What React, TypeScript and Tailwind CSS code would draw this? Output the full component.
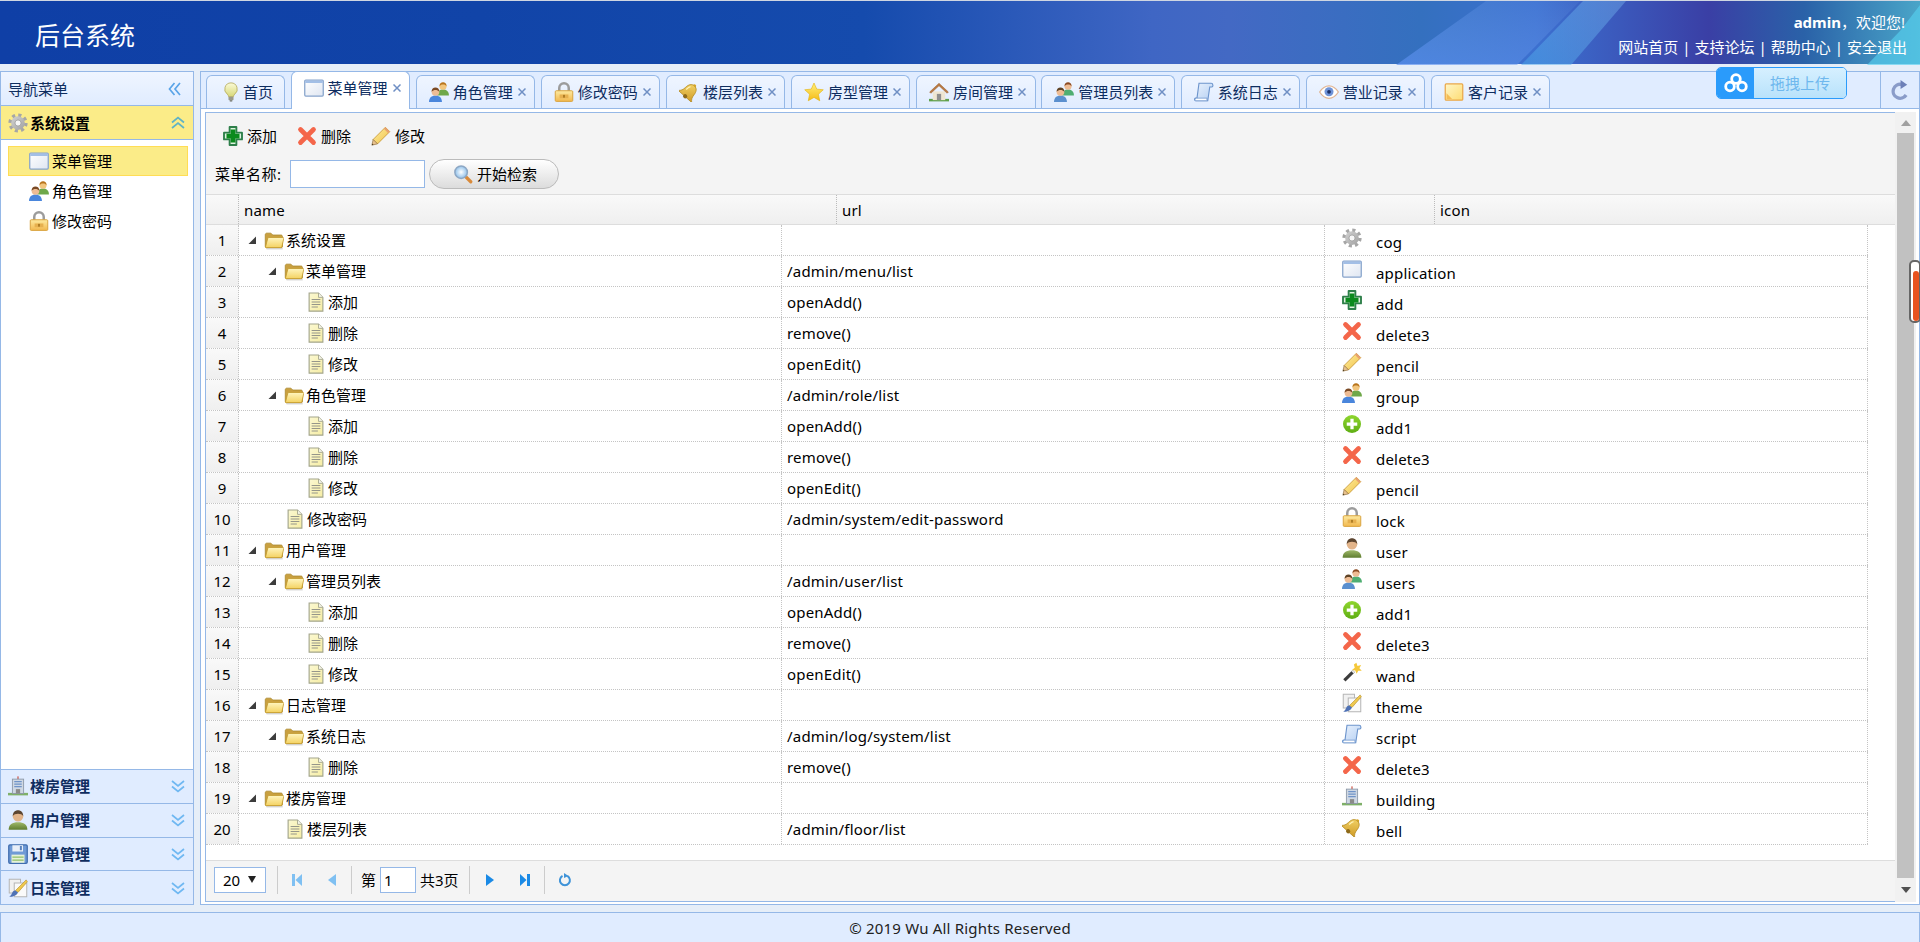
import type { ReactNode } from "react";

// small person used by the group / users / user icons
const Person = ({ x, y, s = 1, hair, skin, body }: { x: number; y: number; s?: number; hair: string; skin: string; body: string }) => (
  <g transform={`translate(${x} ${y}) scale(${s})`}>
    <path d="M0 10c0-3 2-4.500 4.500-4.500S9 7 9 10z" fill={body} />
    <circle cx="4.500" cy="3" r="2.700" fill={skin} />
    <path d="M1.800 3c0-2 1.200-3 2.700-3s2.700 1 2.700 3c-.8-1-1.600-1.300-2.700-1.300S2.600 2 1.800 3z" fill={hair} />
  </g>
);

const ICONS: Record<string, ReactNode> = {
  bulb: (
    <>
      <path d="M8 .7a5 5 0 0 0-3 9c.7.6 1 1.200 1 2h4c0-.8.3-1.400 1-2a5 5 0 0 0-3-9z" fill="url(#bulbFill)" stroke="#b8ae62" strokeWidth=".7" />
      <rect x="6" y="11.800" width="4" height="2.800" rx=".6" fill="#9a9a8c" />
      <rect x="7" y="14.600" width="2" height="1" fill="#6d6d62" />
    </>
  ),
  app: (
    <>
      <rect x=".6" y="1.600" width="14.800" height="12.800" rx=".8" fill="url(#winFill)" stroke="#86a3cb" strokeWidth="1" />
      <rect x="1" y="2" width="14" height="2" fill="#a3bfe6" />
    </>
  ),
  group: (
    <>
      <Person x={6.5} y={0.2} s={1.05} hair="#b8741d" skin="#f2c67e" body="#6fa84a" />
      <Person x={0} y={4.4} s={1.15} hair="#7a4a25" skin="#eebc94" body="#4a86dc" />
    </>
  ),
  users: (
    <>
      <Person x={6.5} y={0.2} s={1.05} hair="#8a4a22" skin="#eebc94" body="#4fae72" />
      <Person x={0} y={4.4} s={1.15} hair="#5f4325" skin="#eebc94" body="#5b90cf" />
    </>
  ),
  user: (
    <>
      <path d="M.5 15.800c0-4.200 3-6 7.500-6s7.500 1.800 7.500 6z" fill="url(#oliveFill)" />
      <circle cx="8" cy="5" r="4.200" fill="#e2b48a" />
      <path d="M3.800 5c0-3.200 1.900-4.800 4.200-4.800S12.200 1.800 12.200 5c-.8-1.500-2.400-2-4.200-2s-3.400.5-4.200 2z" fill="#5c4530" />
    </>
  ),
  lock: (
    <>
      <path d="M4.200 8V4.800a3.800 3.800 0 0 1 7.600 0V8" fill="none" stroke="#9c9c9c" strokeWidth="2" />
      <rect x="1" y="7" width="14" height="8.500" rx=".8" fill="url(#goldFill)" stroke="#d9a441" strokeWidth=".8" />
      <rect x="4.500" y="10" width="7" height="3" fill="#e6b04f" />
      <rect x="7.300" y="10.300" width="1.400" height="2.200" fill="#a87722" />
    </>
  ),
  bell: (
    <g transform="rotate(42 8 8)">
      <circle cx="8" cy="1.400" r="1.300" fill="#d9a520" />
      <path d="M8 1.500C5 1.500 3.700 4 3.500 7c-.2 3-1 4.300-2.700 5.800h14.400c-1.700-1.500-2.500-2.800-2.700-5.800C12.300 4 11 1.500 8 1.500z" fill="url(#bellFill)" stroke="#b38a22" strokeWidth=".6" />
      <circle cx="8" cy="12.600" r="1.700" fill="#8e6a1a" />
      <path d="M6 4c-.7 1-.9 2.500-1 4" stroke="#fff3b8" strokeWidth="1" fill="none" />
    </g>
  ),
  star: (
    <polygon points="8,.8 10.200,5.700 15.400,6.200 11.500,9.800 12.600,15 8,12.300 3.400,15 4.500,9.800 .6,6.200 5.800,5.700" fill="url(#starFill)" stroke="#e3b30e" strokeWidth=".5" />
  ),
  house: (
    <>
      <rect x="0" y="13.500" width="16" height="2" fill="#5fa04a" />
      <rect x="3" y="7.500" width="10" height="7" fill="#efe6d2" />
      <path d="M8 1 .5 8l1 1L8 3l6.500 6 1-1z" fill="#b97a43" stroke="#9a5f2e" strokeWidth=".4" />
      <rect x="6.300" y="9.500" width="3.400" height="5" fill="#8f8f8f" />
    </>
  ),
  script: (
    <>
      <path d="M4 1h9.800c1.500 0 1.800 2.800.4 3H12.600L11 15H1.200c-.9 0-1.100-1.900 0-2.100h1.200z" fill="url(#scriptFill)" stroke="#6c94cc" strokeWidth=".9" />
      <path d="M1.200 15h9.600c-.6-.5-.7-1.700-.2-2.100H2" fill="#fff" stroke="#6c94cc" strokeWidth=".6" />
    </>
  ),
  eye: (
    <>
      <path d="M.5 8C3 4 5.500 3 8 3s5 1 7.500 5C13 12 10.500 13 8 13S3 12 .5 8z" fill="#fff" stroke="#e0b594" strokeWidth="1" />
      <circle cx="8" cy="7.800" r="3.600" fill="#6f93d8" />
      <circle cx="8" cy="7.800" r="1.500" fill="#1b2f66" />
    </>
  ),
  note: (
    <>
      <rect x="1" y="1.500" width="14" height="13" rx=".8" fill="url(#noteFill)" stroke="#eaa84a" strokeWidth="1" />
      <path d="M2 13.500V9l4.500 4.500z" fill="#f5bd57" />
    </>
  ),
  cog: (
    <>
      <circle cx="8" cy="8" r="6.300" fill="none" stroke="#a6a6a6" strokeWidth="2.800" strokeDasharray="2.475 2.475" />
      <circle cx="8" cy="8" r="5.500" fill="url(#cogFill)" />
      <circle cx="8" cy="8" r="2.400" fill="#f6f6f6" stroke="#8e8e8e" strokeWidth=".5" />
    </>
  ),
  add: (
    <>
      <path d="M5.300.8h5.400v4.500h4.500v5.400h-4.500v4.500H5.300v-4.500H.8V5.300h4.500z" fill="#dff3df" stroke="#2e7f4a" strokeWidth="1.500" strokeLinejoin="round" />
      <path d="M6.100 2.800h3.800v3.300h3.300v3.800H9.900v3.300H6.100V9.900H2.800V6.100h3.300z" fill="#0b8a1d" />
    </>
  ),
  delete3: (
    <path d="M2.800 2.800 13.200 13.200M13.200 2.800 2.800 13.200" stroke="#f4664a" strokeWidth="3.800" strokeLinecap="round" />
  ),
  pencil: (
    <>
      <path d="M11.500 1 15 4.500 5.200 14.300 1.700 10.800z" fill="url(#pencilFill)" stroke="#c99a3c" strokeWidth=".7" />
      <path d="M1.700 10.800 .7 15.300l4.500-1z" fill="#e7c08c" stroke="#8a6a3a" strokeWidth=".5" />
      <path d="M1 14 .7 15.300 2 15z" fill="#4a3a22" />
      <path d="M11.500 1 15 4.500 13.800 5.700 10.300 2.200z" fill="#e8a070" />
    </>
  ),
  add1: (
    <>
      <circle cx="8" cy="8" r="7.200" fill="url(#limeFill)" />
      <path d="M6.700 3.800h2.600v2.900h2.900v2.600H9.300v2.900H6.700V9.300H3.800V6.700h2.900z" fill="#fff" />
    </>
  ),
  wand: (
    <>
      <path d="M1 13.800 8.500 6.300l1.800 1.800L2.800 15.600z" fill="#3c3c3c" />
      <path d="M7.500 7.300 8.500 6.300l1.800 1.800-1 1z" fill="#e8e8e8" />
      <polygon points="11.500,.5 12.400,3.100 15.300,2.300 13.900,5 15.800,7 13,7 11.700,9.400 10.600,6.800 8,6.300 10.200,4.500 9.500,1.900" fill="#f5c83a" />
    </>
  ),
  theme: (
    <>
      <rect x="1" y="1" width="9" height="11" fill="#f1f1f1" stroke="#b5b5b5" strokeWidth=".8" />
      <rect x="5" y="4" width="10" height="11" fill="#fafafa" stroke="#b5b5b5" strokeWidth=".8" />
      <path d="M14.500 1.500 15.500 3 8 11.500 6 10z" fill="#efc94e" stroke="#b78e2c" strokeWidth=".5" />
      <path d="M6 10 8 11.500C7 14 4 15 1 15c1.500-1 2-2.500 2.500-3.500.5-1 1.500-1.500 2.500-1.500z" fill="#4f72b5" />
    </>
  ),
  building: (
    <>
      <rect x="0" y="13.500" width="16" height="2" fill="#7fb069" />
      <rect x="7.500" y=".3" width="1" height="2.500" fill="#d0584a" />
      <rect x="3.500" y="2.500" width="9" height="11.500" fill="#cfd8e4" stroke="#8b97a6" strokeWidth=".7" />
      <path d="M5 4.500h6M5 6.500h6M5 8.500h6" stroke="#6f93c8" strokeWidth="1" />
      <rect x="6.300" y="10.500" width="3.400" height="3.500" fill="#8a8a8a" />
    </>
  ),
  save: (
    <>
      <rect x=".6" y=".6" width="14.800" height="14.800" rx="1" fill="#6f9ad6" stroke="#3f6cae" strokeWidth="1" />
      <rect x="3.500" y="1" width="8.500" height="5" fill="#e9eff8" />
      <rect x="9.500" y="1.600" width="1.600" height="3.400" fill="#5a83be" />
      <rect x="2.800" y="8.500" width="10.400" height="6.500" fill="#e6f2d8" />
      <path d="M3.500 10.500h9M3.500 12.800h9" stroke="#8fbf68" strokeWidth="1" />
    </>
  ),
  folder: (
    <>
      <path d="M1 4c0-1 .5-1.500 1.300-1.500h3.200L7 4h6.500c.8 0 1.300.5 1.300 1.300V13c0 .8-.5 1.300-1.300 1.300H2.300C1.500 14.300 1 13.800 1 13z" fill="#c9a040" stroke="#a98628" strokeWidth=".6" />
      <path d="M1.200 13.600 3 6.700c.1-.4.400-.7.900-.7h11.200c.6 0 .9.400.7.900l-1.500 6.500c-.1.500-.5.700-1 .7H1.900c-.5 0-.8-.2-.7-.5z" fill="url(#folderFill)" stroke="#c09728" strokeWidth=".6" />
      <rect x="2" y="14.600" width="13" height=".9" fill="#cfcfcf" />
    </>
  ),
  file: (
    <>
      <path d="M2.500 .8h7.500l3.500 3.500v11H2.500z" fill="url(#fileFill)" stroke="#a3a58c" strokeWidth=".9" />
      <path d="M10 .8v3.500h3.500" fill="#f4f4e8" stroke="#a3a58c" strokeWidth=".7" />
      <path d="M4.500 6h7M4.500 8h7M4.500 10h7M4.500 12h5" stroke="#96968a" strokeWidth=".8" />
    </>
  ),
  search: (
    <>
      <path d="M9.800 9.800 14.200 14.200" stroke="#d98a3a" strokeWidth="2.600" strokeLinecap="round" />
      <circle cx="6.500" cy="6.500" r="5" fill="url(#glassFill)" stroke="#8da7c4" strokeWidth="1.200" />
    </>
  ),
};

const Icon = ({ name, size = 20 }: { name: string; size?: number }) => (
  <svg viewBox="0 0 16 16" width={size} height={size} className="block shrink-0">
    {ICONS[name]}
  </svg>
);

// shared gradients for the icon set
const IconDefs = () => (
  <svg className="absolute h-0 w-0" aria-hidden="true">
    <defs>
      <linearGradient id="bulbFill" x1="0" y1="0" x2="0" y2="1"><stop offset="0" stopColor="#fbfbd8" /><stop offset="1" stopColor="#d7d878" /></linearGradient>
      <linearGradient id="winFill" x1="0" y1="0" x2="1" y2="1"><stop offset="0" stopColor="#ffffff" /><stop offset="1" stopColor="#dfe6f2" /></linearGradient>
      <linearGradient id="cogFill" x1="0" y1="0" x2="1" y2="1"><stop offset="0" stopColor="#d2d2d2" /><stop offset="1" stopColor="#a2a2a2" /></linearGradient>
      <linearGradient id="oliveFill" x1="0" y1="0" x2="0" y2="1"><stop offset="0" stopColor="#9fb86a" /><stop offset="1" stopColor="#5f7d2f" /></linearGradient>
      <linearGradient id="goldFill" x1="0" y1="0" x2="0" y2="1"><stop offset="0" stopColor="#fdeaa0" /><stop offset="1" stopColor="#f2b84e" /></linearGradient>
      <linearGradient id="bellFill" x1="0" y1="0" x2="1" y2="1"><stop offset="0" stopColor="#f8dc72" /><stop offset="1" stopColor="#cf9a25" /></linearGradient>
      <linearGradient id="starFill" x1="0" y1="0" x2="0" y2="1"><stop offset="0" stopColor="#fff07a" /><stop offset="1" stopColor="#f6bb16" /></linearGradient>
      <linearGradient id="scriptFill" x1="0" y1="0" x2="1" y2="1"><stop offset="0" stopColor="#eaf2fd" /><stop offset="1" stopColor="#b4cff2" /></linearGradient>
      <linearGradient id="noteFill" x1="0" y1="0" x2="1" y2="1"><stop offset="0" stopColor="#fff6c8" /><stop offset="1" stopColor="#fddc73" /></linearGradient>
      <linearGradient id="pencilFill" x1="0" y1="0" x2="1" y2="1"><stop offset="0" stopColor="#fff0a0" /><stop offset="1" stopColor="#f0c048" /></linearGradient>
      <linearGradient id="limeFill" x1="0" y1="0" x2="0" y2="1"><stop offset="0" stopColor="#8fd62f" /><stop offset="1" stopColor="#5fae14" /></linearGradient>
      <linearGradient id="folderFill" x1="0" y1="0" x2="0" y2="1"><stop offset="0" stopColor="#fff5bf" /><stop offset="1" stopColor="#f4d261" /></linearGradient>
      <linearGradient id="fileFill" x1="0" y1="0" x2="1" y2="1"><stop offset="0" stopColor="#fbf8d2" /><stop offset="1" stopColor="#f6eda4" /></linearGradient>
      <radialGradient id="glassFill"><stop offset="0" stopColor="#ffffff" /><stop offset="1" stopColor="#8fc0ea" /></radialGradient>
    </defs>
  </svg>
);

// double chevron of the panel headers
const Chevrons = ({ dir, color }: { dir: "up" | "down" | "left"; color: string }) => {
  const rotate = dir === "up" ? 180 : dir === "left" ? 90 : 0;
  return (
    <svg viewBox="0 0 14 14" width="14" height="14" className="block shrink-0" style={{ transform: `rotate(${rotate}deg)` }}>
      <path d="M1 2 7 7l6-5M1 7.500 7 12.500l6-5" fill="none" stroke={color} strokeWidth="1.700" />
    </svg>
  );
};

const Close = () => (
  <svg viewBox="0 0 8 8" width="8" height="8" className="block shrink-0">
    <path d="M.5.5l7 7M7.500.5l-7 7" stroke="#6f8fc4" strokeWidth="1.500" />
  </svg>
);

const TreeArrow = () => (
  <svg viewBox="0 0 10 10" width="10" height="10" className="block shrink-0">
    <polygon points="9,1.500 9,9 1.500,9" fill="#3c3c3c" />
  </svg>
);

const TABS = [
  { label: "首页", icon: "bulb", width: "w-[79px]", home: true },
  { label: "菜单管理", icon: "app", width: "w-[119.5px]", active: true },
  { label: "角色管理", icon: "group", width: "w-[119.5px]" },
  { label: "修改密码", icon: "lock", width: "w-[119.5px]" },
  { label: "楼层列表", icon: "bell", width: "w-[119.5px]" },
  { label: "房型管理", icon: "star", width: "w-[119.5px]" },
  { label: "房间管理", icon: "house", width: "w-[119.5px]" },
  { label: "管理员列表", icon: "users", width: "w-[134px]" },
  { label: "系统日志", icon: "script", width: "w-[119.5px]" },
  { label: "营业记录", icon: "eye", width: "w-[119.5px]" },
  { label: "客户记录", icon: "note", width: "w-[119.5px]" },
];

const ROWS = [
  { name: "系统设置", depth: 0, folder: true, url: "", icon: "cog", iconName: "cog" },
  { name: "菜单管理", depth: 1, folder: true, url: "/admin/menu/list", icon: "app", iconName: "application" },
  { name: "添加", depth: 2, url: "openAdd()", icon: "add", iconName: "add" },
  { name: "删除", depth: 2, url: "remove()", icon: "delete3", iconName: "delete3" },
  { name: "修改", depth: 2, url: "openEdit()", icon: "pencil", iconName: "pencil" },
  { name: "角色管理", depth: 1, folder: true, url: "/admin/role/list", icon: "group", iconName: "group" },
  { name: "添加", depth: 2, url: "openAdd()", icon: "add1", iconName: "add1" },
  { name: "删除", depth: 2, url: "remove()", icon: "delete3", iconName: "delete3" },
  { name: "修改", depth: 2, url: "openEdit()", icon: "pencil", iconName: "pencil" },
  { name: "修改密码", depth: 1, url: "/admin/system/edit-password", icon: "lock", iconName: "lock" },
  { name: "用户管理", depth: 0, folder: true, url: "", icon: "user", iconName: "user" },
  { name: "管理员列表", depth: 1, folder: true, url: "/admin/user/list", icon: "users", iconName: "users" },
  { name: "添加", depth: 2, url: "openAdd()", icon: "add1", iconName: "add1" },
  { name: "删除", depth: 2, url: "remove()", icon: "delete3", iconName: "delete3" },
  { name: "修改", depth: 2, url: "openEdit()", icon: "wand", iconName: "wand" },
  { name: "日志管理", depth: 0, folder: true, url: "", icon: "theme", iconName: "theme" },
  { name: "系统日志", depth: 1, folder: true, url: "/admin/log/system/list", icon: "script", iconName: "script" },
  { name: "删除", depth: 2, url: "remove()", icon: "delete3", iconName: "delete3" },
  { name: "楼房管理", depth: 0, folder: true, url: "", icon: "building", iconName: "building" },
  { name: "楼层列表", depth: 1, url: "/admin/floor/list", icon: "bell", iconName: "bell" },
];

const Banner = () => (
  <svg viewBox="0 0 1920 64" width="1920" height="64" className="absolute left-0 top-0 block">
    <defs>
      <linearGradient id="streakA" x1="0" y1="1" x2="1" y2="0"><stop offset="0" stopColor="#5a8ff0" stopOpacity=".7" /><stop offset="1" stopColor="#6f9fe8" stopOpacity=".1" /></linearGradient>
      <linearGradient id="streakB" x1="0" y1="1" x2="1" y2="0"><stop offset="0" stopColor="#4aa6e8" stopOpacity=".5" /><stop offset="1" stopColor="#7ab8f0" stopOpacity=".4" /></linearGradient>
    </defs>
    <polygon points="1396,64 1517,64 1580,0 1486,0" fill="url(#streakA)" />
    <polygon points="1521,64 1571,64 1626,0 1583,0" fill="url(#streakB)" />
    <polygon points="1867,64 1920,64 1920,4 1900,30" fill="#56cfee" opacity=".65" />
  </svg>
);

const West = () => (
  <aside className="flex w-[194px] shrink-0 flex-col border border-[#95b8e7] bg-white">
    <div className="flex h-[34px] shrink-0 items-center justify-between border-b border-[#95b8e7] bg-gradient-to-b from-[#eff5ff] to-[#e0ecff] pl-[7px] pr-[11px] text-[#0e2d5f]">
      <span>导航菜单</span>
      <Chevrons dir="left" color="#5aa4e8" />
    </div>
    <div className="flex h-[34px] shrink-0 items-center border-b border-[#95b8e7] bg-[#fbec88] pl-[7px] pr-[8px]">
      <Icon name="cog" />
      <span className="ml-[2px] flex-1 font-bold text-black">系统设置</span>
      <Chevrons dir="up" color="#5fb3c6" />
    </div>
    <div className="flex-1 pl-[7px] pr-[5px] pt-[6px]">
      <div className="flex h-[30px] items-center border border-[#ffdd55] bg-[#fbec88] pl-[20px] text-black">
        <Icon name="app" />
        <span className="ml-[3px]">菜单管理</span>
      </div>
      <div className="flex h-[30px] items-center pl-[21px] text-black">
        <Icon name="group" />
        <span className="ml-[3px]">角色管理</span>
      </div>
      <div className="flex h-[30px] items-center pl-[21px] text-black">
        <Icon name="lock" />
        <span className="ml-[3px]">修改密码</span>
      </div>
    </div>
    {[
      { label: "楼房管理", icon: "building" },
      { label: "用户管理", icon: "user" },
      { label: "订单管理", icon: "save" },
      { label: "日志管理", icon: "theme" },
    ].map((item) => (
      <div key={item.label} className="flex h-[33.75px] shrink-0 items-center border-t border-[#95b8e7] bg-[#e0ecff] pl-[7px] pr-[8px]">
        <Icon name={item.icon} />
        <span className="ml-[2px] flex-1 font-bold text-[#0e2d5f]">{item.label}</span>
        <Chevrons dir="down" color="#6fb8f2" />
      </div>
    ))}
  </aside>
);

const TabStrip = () => (
  <div className="flex h-[37px] shrink-0 items-end gap-[5.6px] border-b border-[#95b8e7] bg-[#e0ecff] pl-[5px]">
    {TABS.map((tab) => (
      <div
        key={tab.label}
        className={`flex h-[33px] items-center rounded-t-[6px] border-x border-t border-[#95b8e7] ${tab.width} ${tab.home ? "pl-[14px]" : "pl-[12px]"} ${tab.active ? "relative -mb-[1px] h-[38px] self-end bg-white pb-[5px]" : "bg-gradient-to-b from-[#eff5ff] to-[#e0ecff]"}`}
      >
        <Icon name={tab.icon} />
        <span className={`${tab.home ? "ml-[2px]" : "ml-[4px]"} text-[#0e2d5f]`}>{tab.label}</span>
        {!tab.home && (
          <span className="ml-[5px]">
            <Close />
          </span>
        )}
      </div>
    ))}
    <div className="ml-auto flex h-full w-[39px] items-center justify-center border-l border-[#95b8e7]">
      <svg viewBox="0 0 16 18" width="18" height="20" className="block">
        <path d="M13.500 13.500A6.300 6.300 0 1 1 9.500 4" fill="none" stroke="#8a9cc9" strokeWidth="3" />
        <polygon points="8.500,0 14.500,4.300 8.500,8" fill="#6d80b8" />
      </svg>
    </div>
  </div>
);

const Toolbar = () => (
  <div className="h-[81px] shrink-0 bg-[#f4f4f4] pt-[8px] text-black">
    <div className="flex h-[30px] items-center gap-[20px] pl-[17px]">
      {[
        { label: "添加", icon: "add" },
        { label: "删除", icon: "delete3" },
        { label: "修改", icon: "pencil" },
      ].map((item) => (
        <div key={item.label} className="flex items-center gap-[4px]">
          <Icon name={item.icon} />
          <span>{item.label}</span>
        </div>
      ))}
    </div>
    <div className="mt-[8px] flex items-center pl-[9px]">
      <span className="w-[75px] tracking-[0.5px]">菜单名称:</span>
      <div className="h-[28px] w-[135px] border border-[#95b8e7] bg-white" />
      <div className="ml-[4px] flex h-[30px] w-[130px] items-center rounded-full border border-[#bbbbbb] bg-gradient-to-b from-white to-[#dcdcdc] pl-[23px]">
        <Icon name="search" />
        <span className="ml-[4px]">开始检索</span>
      </div>
    </div>
  </div>
);

const GridHeader = () => (
  <div className="flex h-[31px] shrink-0 items-stretch border-y border-[#dddddd] bg-gradient-to-b from-[#f9f9f9] to-[#efefef] tracking-[0.2px] text-black">
    <div className="w-[33px] border-r border-dotted border-[#bbbbbb]" />
    <div className="flex w-[598px] items-center border-r border-dotted border-[#bbbbbb] pl-[5px]">name</div>
    <div className="flex w-[598px] items-center border-r border-dotted border-[#bbbbbb] pl-[5px]">url</div>
    <div className="flex flex-1 items-center pl-[5px]">icon</div>
  </div>
);

const GridRow = ({ row, index }: { row: (typeof ROWS)[number]; index: number }) => {
  const indent = row.folder ? 8 + row.depth * 20 : 46 + (row.depth - 1) * 21;
  return (
    <div className="flex h-[31px] w-[1662px] border-b border-dotted border-[#c4c4c4] text-black">
      <div className="flex w-[33px] items-center justify-center border-r border-dotted border-[#c4c4c4] bg-gradient-to-b from-[#f9f9f9] to-[#efefef]">
        {index + 1}
      </div>
      <div className="flex w-[543px] items-center border-r border-dotted border-[#c4c4c4]" style={{ paddingLeft: indent }}>
        {row.folder && <TreeArrow />}
        {row.folder && <span className="w-[7px]" />}
        <Icon name={row.folder ? "folder" : "file"} />
        <span className="ml-[2px]">{row.name}</span>
      </div>
      <div className="flex w-[543px] items-center border-r border-dotted border-[#c4c4c4] pl-[5px] tracking-[0.2px]">{row.url}</div>
      <div className="flex w-[543px] items-center border-r border-dotted border-[#c4c4c4] pl-[17px]">
        <span className="mt-[3px] self-start">
          <Icon name={row.icon} />
        </span>
        <span className="ml-[14px] pt-[4px] tracking-[0.2px]">{row.iconName}</span>
      </div>
    </div>
  );
};

const PagerSep = ({ className }: { className: string }) => (
  <span className={`h-[28px] w-[1px] bg-[#cccccc] ${className}`} />
);

const Pager = () => (
  <div className="flex h-[41px] shrink-0 items-center border-t border-[#dddddd] bg-[#f4f4f4] pb-[3px] pl-[8px] text-black">
    <div className="flex h-[26px] w-[52px] items-center border border-[#95b8e7] bg-white pl-[8px]">
      <span>20</span>
      <svg viewBox="0 0 8 7" width="8" height="7" className="ml-[8px] block">
        <polygon points="0,0 8,0 4,7" fill="#222222" />
      </svg>
    </div>
    <PagerSep className="ml-[11px]" />
    <svg viewBox="0 0 10 12" width="10" height="12" className="ml-[14px] block">
      <rect x="0" y="0" width="3" height="12" fill="#7fc0f2" />
      <polygon points="10,0 10,12 3.500,6" fill="#7fc0f2" />
    </svg>
    <svg viewBox="0 0 8 12" width="8" height="12" className="ml-[26px] block">
      <polygon points="8,0 8,12 0,6" fill="#7fc0f2" />
    </svg>
    <PagerSep className="ml-[15px]" />
    <span className="ml-[9px]">第</span>
    <div className="ml-[4px] flex h-[26px] w-[36px] items-center border border-[#95b8e7] bg-white pl-[3px]">1</div>
    <span className="ml-[4px]">共3页</span>
    <PagerSep className="ml-[10px]" />
    <svg viewBox="0 0 8 12" width="8" height="12" className="ml-[16px] block">
      <polygon points="0,0 0,12 8,6" fill="#1a8ae6" />
    </svg>
    <svg viewBox="0 0 10 12" width="10" height="12" className="ml-[26px] block">
      <polygon points="0,0 0,12 6.500,6" fill="#1a8ae6" />
      <rect x="7" y="0" width="3" height="12" fill="#1a8ae6" />
    </svg>
    <PagerSep className="ml-[14px]" />
    <svg viewBox="0 0 14 14" width="14" height="14" className="ml-[13px] block">
      <path d="M9.300 2.900A5 5 0 1 1 4.500 2.900" fill="none" stroke="#3f93d8" strokeWidth="2" />
      <polygon points="6,0 10.500,3 6,5" fill="#3f93d8" />
    </svg>
  </div>
);

const App = () => {
  return (
    <div className="relative flex h-[942px] w-[1920px] flex-col overflow-hidden bg-[#e6eef8] font-['Noto_Sans','Noto_Sans_CJK_SC',sans-serif] text-[15px] leading-[20px]">
      <IconDefs />
      {/* Header */}
      <header className="relative flex h-[64px] shrink-0 justify-between border-t border-[#cfd6e2] bg-[linear-gradient(90deg,#0f3fa6_0%,#1144a8_25%,#154bad_45%,#3f66c4_60%,#4369c4_64%,#3470bf_74%,#3c70d0_80%,#3a3fa5_89%,#2a62a8_94%,#4aa5c8_100%)] text-white">
        <Banner />
        <h1 className="relative ml-[35px] mt-[17px] text-[25px] leading-[34px]">后台系统</h1>
        <div className="relative mr-[13px] flex flex-col items-end pt-[11px]">
          <div className="mr-[2px]">
            <b>admin</b>，欢迎您!
          </div>
          <div className="mt-[5px] flex gap-[4px]">
            <span>网站首页</span>
            <span>|</span>
            <span>支持论坛</span>
            <span>|</span>
            <span>帮助中心</span>
            <span>|</span>
            <span>安全退出</span>
          </div>
        </div>
      </header>

      <div className="mt-[7px] flex h-[834px] shrink-0 gap-[6px]">
        <West />

        {/* Center */}
        <main className="flex min-w-0 flex-1 flex-col border border-[#95b8e7] bg-white">
          <TabStrip />
          <div className="flex min-h-0 flex-1 pb-[2px] pl-[4px] pr-[3px] pt-[3px]">
            <div className="flex min-w-0 flex-1 flex-col border-y border-l border-[#95b8e7]">
              <Toolbar />
              <GridHeader />
              <div className="min-h-0 flex-1 bg-white">
                {ROWS.map((row, i) => (
                  <GridRow key={i} row={row} index={i} />
                ))}
              </div>
              <Pager />
            </div>

            {/* Scrollbar */}
            <div className="flex w-[21px] shrink-0 flex-col items-center bg-[#f1f1f1]">
              <div className="flex h-[21px] shrink-0 items-center justify-center">
                <svg viewBox="0 0 10 6" width="10" height="6" className="block">
                  <polygon points="5,0 10,6 0,6" fill="#a0a0a0" />
                </svg>
              </div>
              <div className="w-[17px] flex-1 bg-[#c1c1c1]" />
              <div className="flex h-[24px] shrink-0 items-center justify-center">
                <svg viewBox="0 0 10 6" width="10" height="6" className="block">
                  <polygon points="0,0 10,0 5,6" fill="#505050" />
                </svg>
              </div>
            </div>
          </div>
        </main>
      </div>

      {/* Footer */}
      <footer className="mt-[7px] flex h-[30px] shrink-0 items-center justify-center border-x border-t border-[#95b8e7] bg-[#e0ecff] tracking-[0.2px] text-[#222222]">
        © 2019 Wu All Rights Reserved
      </footer>

      {/* Upload widget floating over the tabs */}
      <div className="absolute left-[1716px] top-[67px] flex h-[32px] w-[131px] overflow-hidden rounded-[5px] border border-[#2a9bfb]">
        <div className="flex w-[37px] items-center justify-center bg-[#2a9bfb]">
          <svg viewBox="0 0 24 20" width="24" height="20" className="block">
            <g fill="none" stroke="#ffffff" strokeWidth="2.800">
              <circle cx="12" cy="6" r="4.300" />
              <circle cx="6" cy="13.500" r="4.300" />
              <circle cx="18" cy="13.500" r="4.300" />
            </g>
          </svg>
        </div>
        <div className="flex flex-1 items-center justify-center bg-gradient-to-b from-[#d6f0ff] to-[#b8e2fb] text-[#6fb8ee]">拖拽上传</div>
      </div>

      {/* Page scroll marker */}
      <div className="absolute left-[1909px] top-[260px] h-[63px] w-[12px] rounded-[5px] border-2 border-[#666666] bg-white pl-[2px] pt-[9px]">
        <div className="h-[50px] w-[6px] rounded-[3px] bg-[#e8531f]" />
      </div>
    </div>
  );
};

export default App;
